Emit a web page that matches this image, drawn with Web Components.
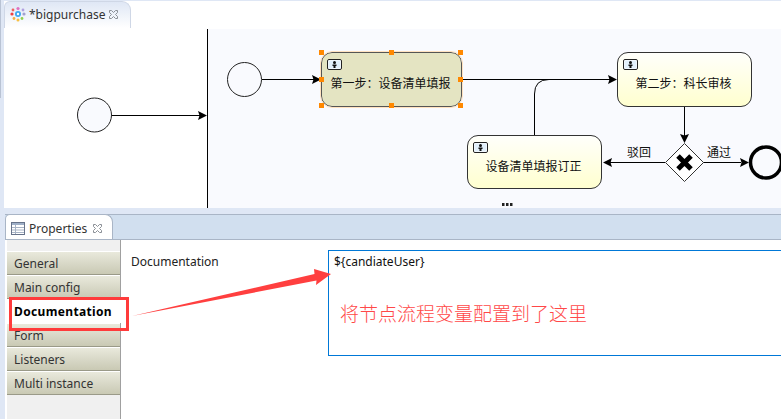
<!DOCTYPE html>
<html lang="zh">
<head>
<meta charset="utf-8">
<title>bigpurchase</title>
<style>
    html, body { margin: 0; height: 100%; overflow: hidden; }
    body {
        background: linear-gradient(#b9c3d4, #b9c3d4) 0 0 / 1px 98px no-repeat, #dfe7f5;
        font: 12px "Noto Sans", "Noto Sans CJK SC", sans-serif;
        color: #222;
    }
    #app {
        position: relative;
        display: flex;
        flex-direction: column;
        height: 419px;
    }
</style>
</head>
<body>
<div id="app">
    <editor-pane title="*bigpurchase">
        <bpmn-canvas>
            <bpmn-task x="321" y="52" w="141" h="55" selected>第一步：设备清单填报</bpmn-task>
            <bpmn-task x="617" y="52" w="135" h="55">第二步：科长审核</bpmn-task>
            <bpmn-task x="467" y="135" w="135" h="54">设备清单填报订正</bpmn-task>
        </bpmn-canvas>
    </editor-pane>
    <properties-pane title="Properties">
        <prop-tab>General</prop-tab>
        <prop-tab>Main config</prop-tab>
        <prop-tab active>Documentation</prop-tab>
        <prop-tab>Form</prop-tab>
        <prop-tab>Listeners</prop-tab>
        <prop-tab>Multi instance</prop-tab>
        <doc-field slot="content" label="Documentation" value="${candiateUser}"></doc-field>
    </properties-pane>
    <red-note>将节点流程变量配置到了这里</red-note>
</div>

<script>
const closeIcon = `
    <svg width="11" height="11" viewBox="0 0 11 11" fill="none" stroke="#8a8f96" stroke-width="1">
        <path d="M1.5 1.5h2l2 2 2-2h2v2l-2 2 2 2v2h-2l-2-2-2 2h-2v-2l2-2-2-2z"/>
    </svg>`;

class EditorPane extends HTMLElement {
    constructor() {
        super();
        this.attachShadow({ mode: 'open' });
    }

    connectedCallback() {
        this.shadowRoot.innerHTML = `
            <style>
                :host {
                    display: flex;
                    flex-direction: column;
                    height: 207px;
                    margin: 1px 0 0 4px;
                    background: #fff;
                }
                .strip { height: 27px; display: flex; background: #fff; flex: none; }
                .tab {
                    box-sizing: border-box;
                    width: 127px;
                    display: flex;
                    align-items: center;
                    padding: 0 11px 2px 5px;
                    gap: 3px;
                    border-radius: 6px 9px 0 0;
                    border: 1px solid #cfd7e6;
                    border-bottom: 0;
                    background: linear-gradient(#dfe7f5, #fff);
                    color: #333;
                    font-size: 12px;
                    white-space: nowrap;
                }
                .tab span { flex: 1; }
                svg { flex: none; }
            </style>
            <div class="strip">
                <div class="tab">
                    <svg width="16" height="16" viewBox="0 0 16 16">
                        <circle cx="8" cy="2.5" r="1.6" fill="#e070c0"/>
                        <circle cx="3" cy="4" r="1.4" fill="#f06060"/>
                        <circle cx="13" cy="4" r="1.4" fill="#b0a0e0"/>
                        <circle cx="2" cy="8" r="1.6" fill="#f04040"/>
                        <circle cx="14" cy="8" r="1.6" fill="#a0a0d0"/>
                        <circle cx="4" cy="12.5" r="1.4" fill="#f8b040"/>
                        <circle cx="12" cy="12.5" r="1.4" fill="#90d050"/>
                        <circle cx="8" cy="14" r="1.5" fill="#f8c040"/>
                        <circle cx="8" cy="8" r="3" fill="#40a8f0"/>
                        <circle cx="8" cy="8" r="1.2" fill="#fff"/>
                    </svg>
                    <span>${this.getAttribute('title')}</span>
                    ${closeIcon}
                </div>
            </div>
            <slot></slot>
        `;
    }
}

class BpmnCanvas extends HTMLElement {
    constructor() {
        super();
        this.attachShadow({ mode: 'open' });
    }

    connectedCallback() {
        // edges are drawn in page coordinates, the canvas starts at (4,28)
        this.shadowRoot.innerHTML = `
            <style>
                :host {
                    display: block;
                    position: relative;
                    flex: 1;
                    overflow: hidden;
                    background: #fff;
                }
                .lane {
                    position: absolute;
                    left: 204px; right: 0; top: 1px; bottom: 0;
                    background: #f9fafe;
                }
                svg { position: absolute; left: -4px; top: -28px; }
                text { font: 12px "Noto Sans CJK SC", sans-serif; fill: #111; }
            </style>
            <div class="lane"></div>
            <svg width="781" height="208" viewBox="0 0 781 208">
                <path d="M207.5 29V208" stroke="#000" fill="none"/>
                <circle cx="94.5" cy="115" r="17" fill="#f9fafe" stroke="#222"/>
                <circle cx="244.5" cy="79.5" r="17" fill="#f9fafe" stroke="#222"/>
                <g fill="none" stroke="#000" stroke-width="1">
                    <path d="M112 115.5H200"/>
                    <path d="M262 79.5H314"/>
                    <path d="M462 79.5H610"/>
                    <path d="M534.5 135V94Q534.5 79.5 549 79.5"/>
                    <path d="M684.5 107V137"/>
                    <path d="M665 162.5H610"/>
                    <path d="M703 162.5H741"/>
                </g>
                <g fill="#000">
                    <path d="M198 111L207 115.5L198 120L199.5 115.5Z"/>
                    <path d="M312 75L321 79.5L312 84L313.500 79.500Z"/>
                    <path d="M608 75L617 79.5L608 84L609.500 79.500Z"/>
                    <path d="M680 134L684.500 143L689 134L684.500 135.500Z"/>
                    <path d="M612 158L603 162.500L612 167L610.500 162.500Z"/>
                    <path d="M740 158L749 162.500L740 167L741.500 162.500Z"/>
                </g>
                <path d="M684.500 143.500L703.500 162.500L684.500 181.500L665.500 162.500Z" fill="#fff" stroke="#333"/>
                <path d="M678 156L691 169M691 156L678 169" stroke="#000" stroke-width="5" fill="none"/>
                <circle cx="766" cy="162.500" r="15.500" fill="#f9fafe" stroke="#000" stroke-width="3.500"/>
                <text x="627" y="157">驳回</text>
                <text x="707" y="157">通过</text>
                <path d="M502 203h2.500v3h-2.500zM506 203h2.500v3h-2.500zM510 203h2.500v3h-2.500z" fill="#222"/>
            </svg>
            <slot></slot>
        `;
    }
}

class BpmnTask extends HTMLElement {
    constructor() {
        super();
        this.attachShadow({ mode: 'open' });
    }

    connectedCallback() {
        const x = Number(this.getAttribute('x'));
        const y = Number(this.getAttribute('y'));
        this.style.left = (x - 4) + 'px';
        this.style.top = (y - 28) + 'px';
        this.style.width = this.getAttribute('w') + 'px';
        this.style.height = this.getAttribute('h') + 'px';
        const handles = this.hasAttribute('selected')
            ? ['0,0', '50%,0', '100%,0', '0,50%', '100%,50%', '0,100%', '50%,100%', '100%,100%']
                .map(p => {
                    const [l, t] = p.split(',');
                    return `<i class="h" style="left:${l};top:${t}"></i>`;
                }).join('')
            : '';
        this.shadowRoot.innerHTML = `
            <style>
                :host {
                    position: absolute;
                    box-sizing: border-box;
                    display: flex;
                    align-items: center;
                    justify-content: center;
                    padding: 6px 2px 0 0;
                    border: 1px solid #333;
                    border-radius: 11px;
                    background: linear-gradient(#fffffb, #ffffcf);
                    font: 12px "Noto Sans CJK SC", sans-serif;
                    color: #111;
                    white-space: nowrap;
                }
                :host([selected]) {
                    background: #e4e4c2;
                    border-color: #555;
                    outline: 1px solid #ffe2c0;
                    outline-offset: 0;
                }
                .icon { position: absolute; left: 5px; top: 6px; }
                .h {
                    position: absolute;
                    width: 5px; height: 5px;
                    margin: -3px 0 0 -3px;
                    background: #ff8800;
                }
            </style>
            <svg class="icon" width="15" height="11" viewBox="0 0 15 11">
                <rect x=".5" y=".5" width="14" height="10" rx="1.500" fill="#fff" stroke="#222"/>
                <rect x="1.500" y="1.500" width="12" height="8" fill="#e2f0fb"/>
                <circle cx="7.500" cy="3.500" r="1.500" fill="#111"/>
                <path d="M5.500 5.500h4v1.500h-1v2h-2v-2h-1z" fill="#111"/>
            </svg>
            <slot></slot>
            ${handles}
        `;
    }
}

class PropertiesPane extends HTMLElement {
    constructor() {
        super();
        this.attachShadow({ mode: 'open' });
    }

    connectedCallback() {
        this.shadowRoot.innerHTML = `
            <style>
                :host {
                    display: flex;
                    flex-direction: column;
                    flex: 1;
                    margin: 6px 0 0 5px;
                    background: #fff;
                    min-height: 0;
                }
                .strip {
                    display: flex;
                    height: 26px;
                    flex: none;
                    box-sizing: border-box;
                    background: #d1dfef;
                    border-top: 1px solid #a9b5c6;
                    border-bottom: 1px solid #a9b5c6;
                }
                .tab {
                    box-sizing: border-box;
                    width: 108px;
                    height: 25px;
                    margin-top: -1px;
                    display: flex;
                    align-items: center;
                    gap: 4px;
                    padding: 2px 9px 0 5px;
                    background: #fff;
                    border: 1px solid #a9b5c6;
                    border-bottom: 0;
                    border-radius: 5px 8px 0 0;
                    color: #333;
                    white-space: nowrap;
                }
                .tab span { flex: 1; }
                svg { flex: none; }
                .body { flex: 1; display: flex; min-height: 0; padding-left: 2px; }
                nav {
                    box-sizing: border-box;
                    width: 114px;
                    flex: none;
                    padding-top: 11px;
                    background: #f0f0f0;
                    border-right: 1px solid #a0a0a0;
                    display: flex;
                    flex-direction: column;
                }
                main { flex: 1; min-width: 0; }
            </style>
            <div class="strip">
                <div class="tab">
                    <svg width="14" height="13" viewBox="0 0 14 13">
                        <rect x=".5" y=".5" width="13" height="12" fill="#fff" stroke="#67738a"/>
                        <rect x="1" y="1" width="12" height="2" fill="#9fb0c8"/>
                        <path d="M4.500 3v9M1 5.500h12M1 8h12M1 10.500h12" stroke="#a8b4c6" fill="none"/>
                    </svg>
                    <span>${this.getAttribute('title')}</span>
                    ${closeIcon}
                </div>
            </div>
            <div class="body">
                <nav><slot></slot></nav>
                <main><slot name="content"></slot></main>
            </div>
        `;
    }
}

class PropTab extends HTMLElement {
    constructor() {
        super();
        this.attachShadow({ mode: 'open' });
    }

    connectedCallback() {
        this.shadowRoot.innerHTML = `
            <style>
                :host {
                    box-sizing: border-box;
                    display: flex;
                    align-items: center;
                    height: 24px;
                    padding: 0 0 0 7px;
                    border-top: 1px solid #fff;
                    border-bottom: 1px solid #9a9a88;
                    background: linear-gradient(#e9e9dc, #c9c9b4);
                    color: #333;
                    white-space: nowrap;
                }
                :host([active]) {
                    background: #fff;
                    border-color: #fff;
                    font-weight: 700;
                    letter-spacing: .35px;
                    color: #000;
                    margin-right: -1px;
                }
            </style>
            <slot></slot>
        `;
    }
}

class DocField extends HTMLElement {
    constructor() {
        super();
        this.attachShadow({ mode: 'open' });
    }

    connectedCallback() {
        this.shadowRoot.innerHTML = `
            <style>
                :host {
                    display: flex;
                    padding: 10px 0 0 10px;
                    color: #222;
                }
                .label { width: 197px; flex: none; line-height: 24px; }
                .box {
                    box-sizing: border-box;
                    flex: 1;
                    height: 106px;
                    margin-right: -6px;
                    padding: 1px 5px;
                    border: 1px solid #0078d7;
                    line-height: 20px;
                    white-space: nowrap;
                    color: #111;
                }
            </style>
            <div class="label"></div>
            <div class="box"></div>
        `;
        this.shadowRoot.querySelector('.label').textContent = this.getAttribute('label');
        this.shadowRoot.querySelector('.box').textContent = this.getAttribute('value');
    }
}

class RedNote extends HTMLElement {
    constructor() {
        super();
        this.attachShadow({ mode: 'open' });
    }

    connectedCallback() {
        // hand drawn annotation lying over the properties view
        this.shadowRoot.innerHTML = `
            <style>
                :host {
                    position: absolute;
                    left: 0; top: 0;
                    width: 781px; height: 419px;
                    pointer-events: none;
                }
                svg { position: absolute; left: 0; top: 0; }
                div {
                    position: absolute;
                    left: 340px; top: 299px;
                    font: 300 19px/28px "Noto Sans CJK SC", sans-serif;
                    color: #ff4848;
                    white-space: nowrap;
                }
            </style>
            <svg width="781" height="419" viewBox="0 0 781 419">
                <rect x="10.500" y="298.500" width="117" height="31" fill="none" stroke="#ff3b3b" stroke-width="3"/>
                <path d="M132 316L314.500 274L314 269L331 274L316 285L316.500 280.500Z" fill="#ff3f3f"/>
            </svg>
            <div><slot></slot></div>
        `;
    }
}

customElements.define('editor-pane', EditorPane);
customElements.define('bpmn-canvas', BpmnCanvas);
customElements.define('bpmn-task', BpmnTask);
customElements.define('properties-pane', PropertiesPane);
customElements.define('prop-tab', PropTab);
customElements.define('doc-field', DocField);
customElements.define('red-note', RedNote);
</script>
</body>
</html>
